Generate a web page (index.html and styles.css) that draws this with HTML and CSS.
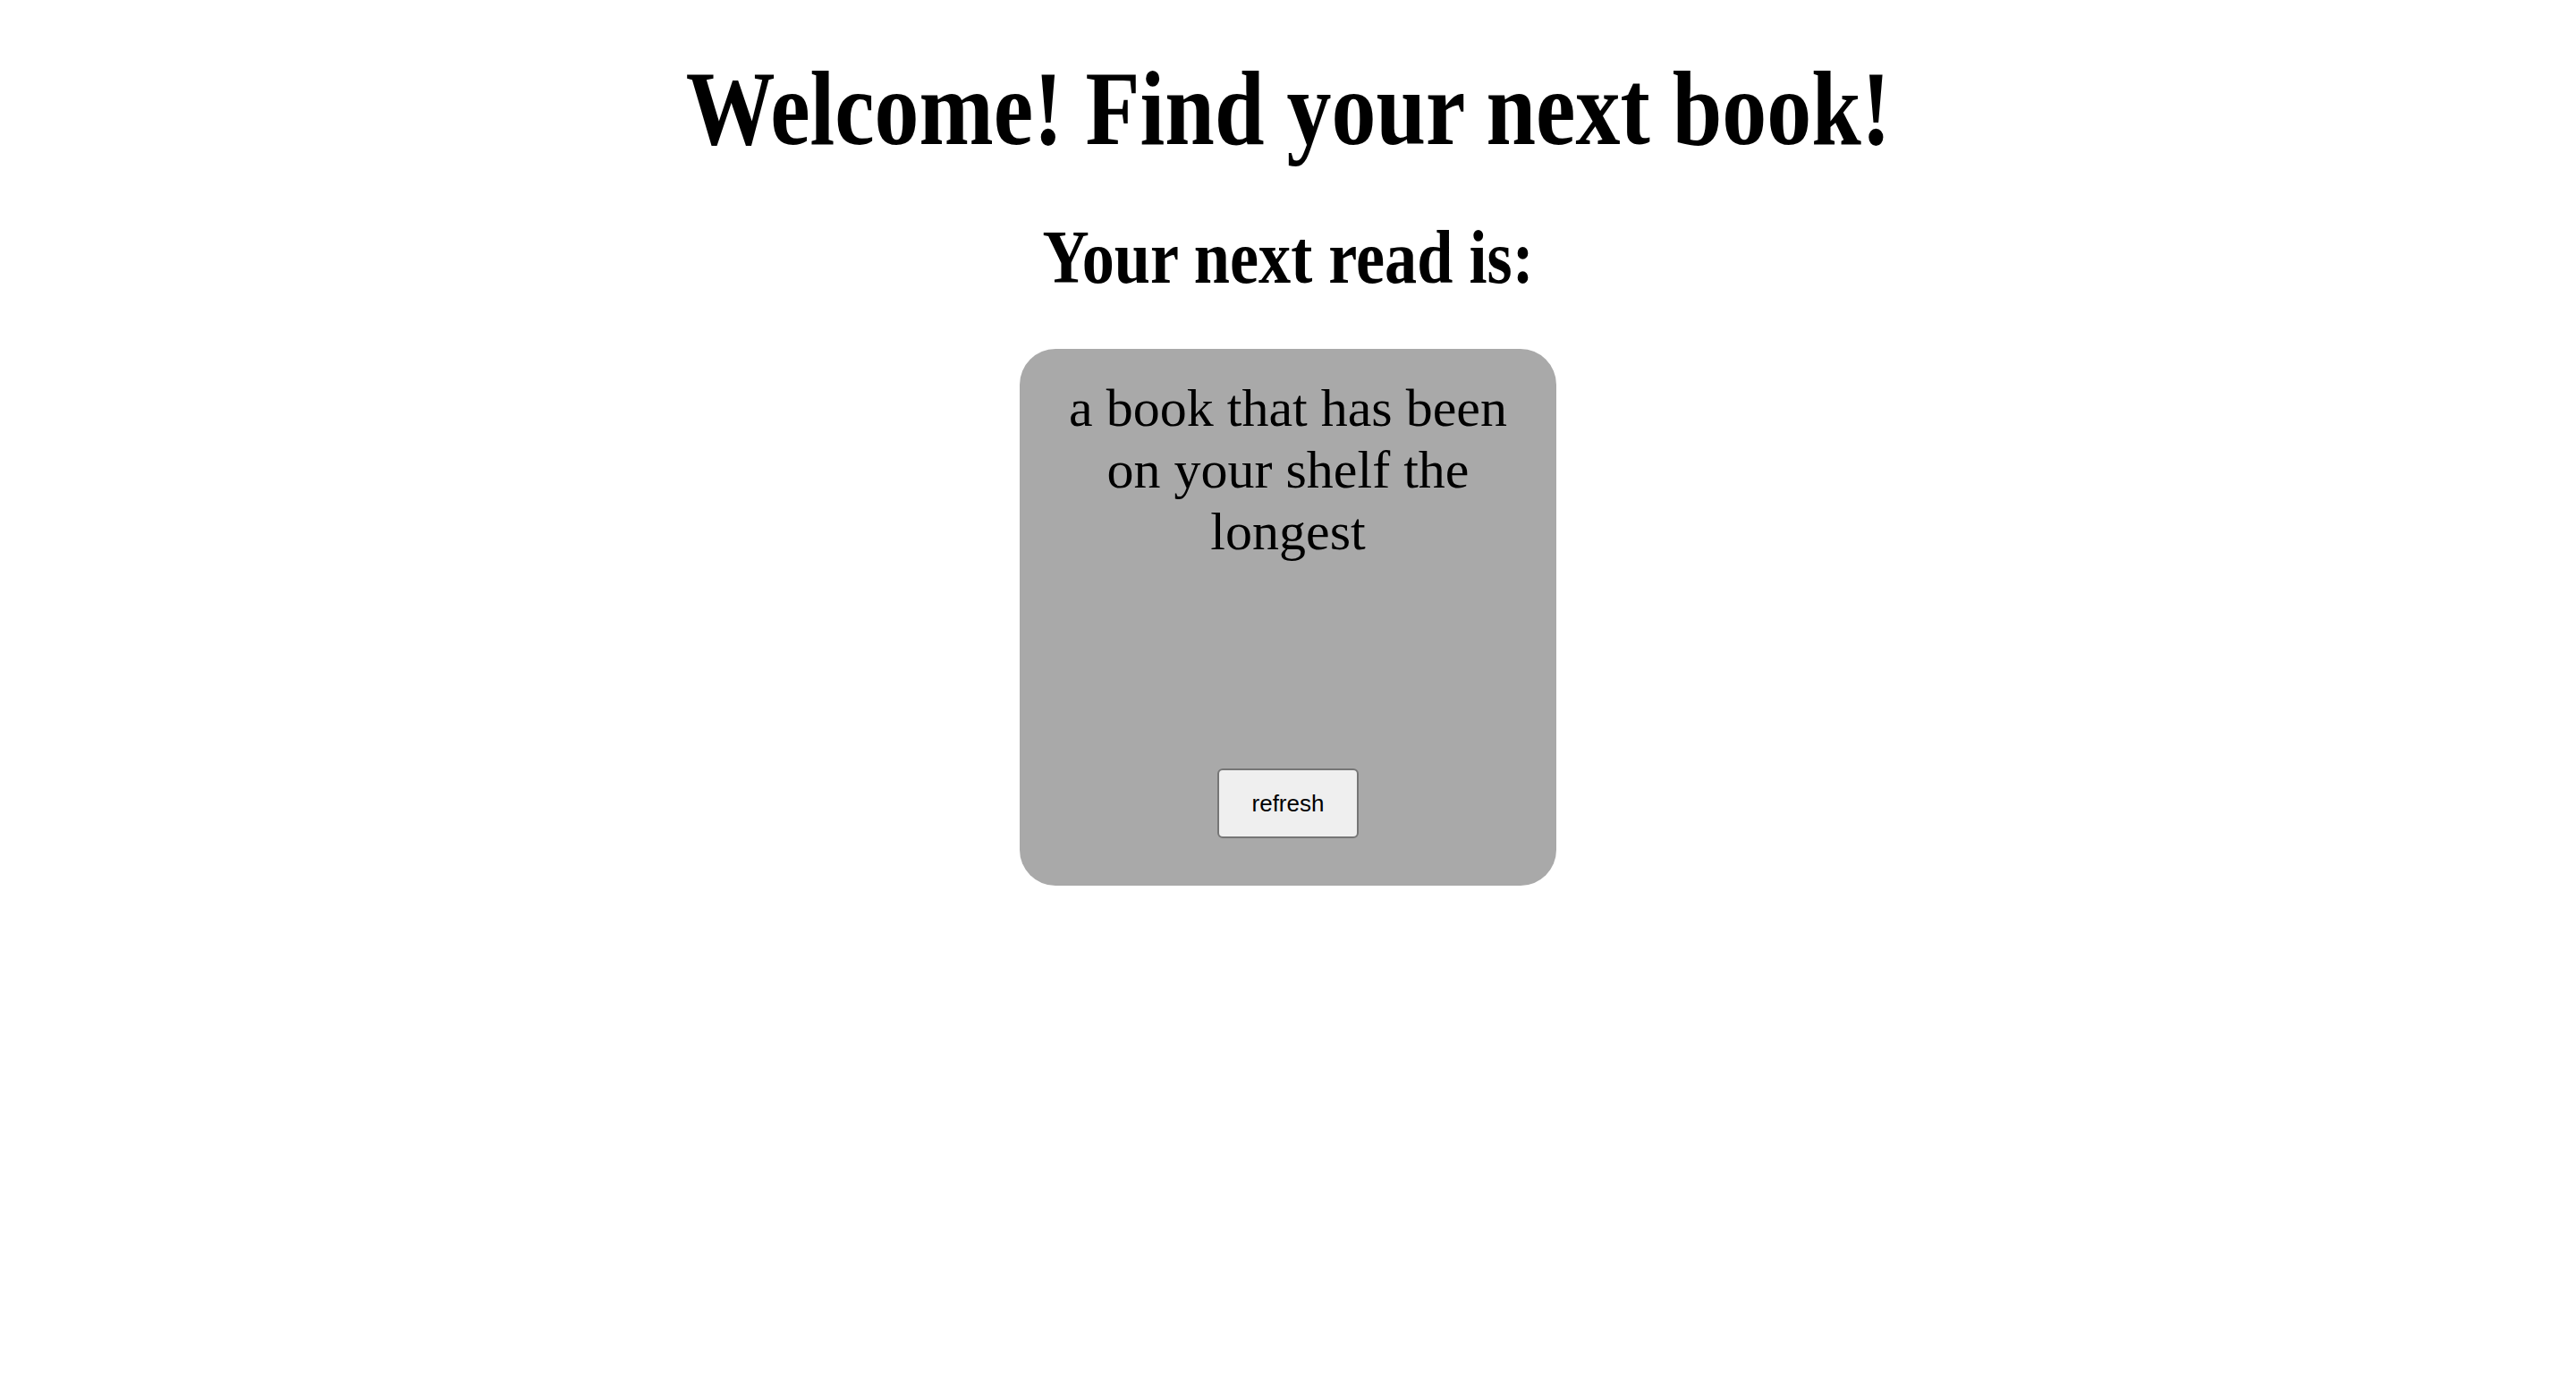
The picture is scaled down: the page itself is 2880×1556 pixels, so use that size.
FILE: index.html
```html
<!DOCTYPE html>
<html lang="en">
<head>
<meta charset="utf-8">
<title>Find your next book</title>
<link rel="stylesheet" href="styles.css">
</head>
<body>
<main class="page">
  <h1 class="title">Welcome! Find your next book!</h1>
  <h2 class="subtitle">Your next read is:</h2>
  <section class="card">
    <p class="suggestion">a book that has been on your shelf the longest</p>
    <button class="refresh" type="button">refresh</button>
  </section>
</main>
</body>
</html>
```

FILE: styles.css
```css
html, body {
  margin: 0;
  padding: 0;
  background: #ffffff;
}

body {
  font-family: "Liberation Serif", "Times New Roman", serif;
  color: #000000;
}

.page {
  display: flex;
  flex-direction: column;
  align-items: center;
  padding-top: 54px;
}

.title {
  margin: 0;
  font-size: 118px;
  line-height: 136px;
  font-weight: bold;
  text-align: center;
  transform: scaleX(0.847);
  white-space: nowrap;
}

.subtitle {
  margin: 48px 0 0;
  font-size: 85px;
  line-height: 98px;
  font-weight: bold;
  text-align: center;
  transform: scaleX(0.85);
  white-space: nowrap;
}

.card {
  box-sizing: border-box;
  width: 600px;
  height: 600px;
  margin-top: 54px;
  padding: 32px 40px 53px;
  background: #a9a9a9;
  border-radius: 40px;
  display: flex;
  flex-direction: column;
  align-items: center;
  justify-content: space-between;
}

.suggestion {
  margin: 0;
  font-size: 60px;
  line-height: 69px;
  text-align: center;
}

.refresh {
  box-sizing: border-box;
  width: 158px;
  height: 78px;
  padding: 0;
  font-family: "Liberation Sans", Arial, sans-serif;
  font-size: 26px;
  color: #000000;
  background: #efefef;
  border: 2px solid #767676;
  border-radius: 6px;
}
```
